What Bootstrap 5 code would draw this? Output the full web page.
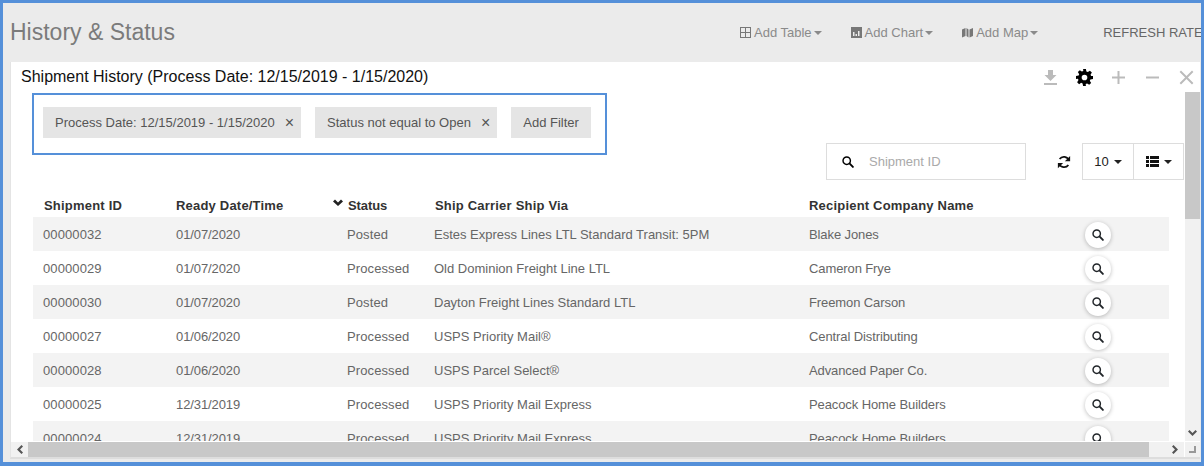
<!DOCTYPE html>
<html lang="en">
  <head>
    <meta charset="UTF-8" />
    <title>History &amp; Status</title>
    <link href="https://cdn.jsdelivr.net/npm/bootstrap@5.3.0/dist/css/bootstrap.min.css" rel="stylesheet" />
    <style>
      html, body { height: 100%; overflow: hidden; }
      body {
        font-family: "Liberation Sans", Arial, sans-serif;
        font-size: 13px;
        color: #555;
        background: #ebebeb;
      }
      .app-frame {
        width: 1204px;
        height: 466px;
        border: solid #5590d9;
        border-width: 3px 3px 4px 3px;
        background: #ebebeb;
        padding-left: 7px;
        display: flex;
        flex-direction: column;
      }
      .page-head { height: 59px; flex: none; }
      .page-title { font-size: 23px; font-weight: 400; color: #7b7b7b; margin: 0; line-height: 1; }
      .head-links { width: 461px; flex: none; overflow: hidden; white-space: nowrap; gap: 30px; margin-left: auto; font-size: 13px; color: #888; }
      .head-link { display: inline-flex; align-items: center; gap: 3px; color: #8a8a8a; text-decoration: none; }
      .head-link svg { fill: #777; }
      .caret-down { display: inline-block; width: 0; height: 0; border-left: 4px solid transparent; border-right: 4px solid transparent; border-top: 4px solid currentColor; }
      .head-link .caret-down { margin-left: -1px; margin-right: -1px; }
      .refresh-rate { color: #666; margin-left: 36px; }
      .panel-box { flex: 1; min-height: 0; background: #fff; border-bottom: 2px solid #ddd; border-left: 1px solid #e4e4e4; margin: 0 1px 3px 0; display: flex; flex-direction: column; }
      .panel-title-row { height: 30px; flex: none; padding: 5px 6px 0 10px; }
      .panel-title { font-size: 16px; color: #111; line-height: 20px; }
      .panel-tools { gap: 19px; padding-top: 3px; }
      .panel-tools svg { fill: #bbb; display: block; }
      .panel-tools svg.tool-dark { fill: #000; margin: -1px -1px 0; }
      .panel-body-row { flex: 1; min-height: 0; display: flex; }
      .panel-main { flex: 1; min-width: 0; overflow: hidden; padding-left: 22px; }
      .filter-box { width: 575px; height: 62px; border: 2px solid #5590d9; margin: 1px 0 0 -1px; padding: 12px 0 0 9px; gap: 14px; }
      .filter-chip { height: 31px; background: #e5e5e5; color: #555; padding: 0 12px; display: flex; align-items: center; white-space: nowrap; }
      .filter-chip:has(.chip-x) { padding-right: 7px; }
      .chip-x { font-size: 16px; margin-left: 10px; line-height: 1; color: #555; }
      .tool-row { height: 37px; margin-top: -12px; padding-right: 1px; align-items: flex-start; }
      .search-box { width: 200px; height: 37px; border: 1px solid #ddd; padding-left: 15px; color: #aaa; gap: 15px; margin-right: 30px; }
      .refresh-btn { width: 16px; margin-right: 10px; height: 37px; }
      .pick-group { border: 1px solid #ddd; height: 37px; color: #222; }
      .pick-cell { width: 50px; height: 35px; gap: 5px; }
      .pick-cell + .pick-cell { border-left: 1px solid #ddd; }
      .grid-table { width: 1136px; margin: 0; table-layout: fixed; --bs-table-striped-bg: #f3f3f3; --bs-table-striped-color: #666; --bs-table-color: #666; --bs-table-bg: transparent; }
      .grid-table th, .grid-table td { border: 0; padding: 0; vertical-align: middle; white-space: nowrap; }
      .grid-table thead th { height: 37px; font-weight: 700; color: #333; padding-left: 11px; padding-top: 15px; letter-spacing: .2px; }
      .grid-table thead th:nth-child(3) { letter-spacing: -.1px; }
      .grid-table tbody td { height: 34px; padding-left: 10px; padding-top: 2px; font-size: 13px; letter-spacing: .1px; }
      .grid-table tbody td:nth-child(2) { padding-left: 11px; letter-spacing: -.1px; }
      .grid-table tbody td:nth-child(4) { letter-spacing: 0; }
      .grid-table tbody td:nth-child(5) { letter-spacing: -.1px; }
      .sort-mark { position: absolute; margin-left: -15px; margin-top: 3px; }
      .view-btn { width: 26px; height: 26px; border-radius: 50%; background: #fff; box-shadow: 0 1px 4px rgba(0,0,0,.25); display: flex; align-items: center; justify-content: center; }
      .vscroll { width: 15px; flex: none; background: #f1f1f1; display: flex; flex-direction: column; }
      .vscroll-thumb { height: 127px; background: #c8c8c8; }
      .hscroll { height: 16px; flex: none; display: flex; background: #f1f1f1; border-top: 1px solid #fff; }
      .hscroll-end { width: 17px; display: flex; align-items: center; justify-content: center; }
      .hscroll-thumb { width: 1121px; background: #c8c8c8; }
      .hscroll-fill { flex: 1; }
      .scroll-corner { width: 16px; display: flex; align-items: center; justify-content: center; border-left: 1px solid #fff; }
    </style>
  </head>
  <body>
    <svg width="0" height="0" class="d-block" style="position:absolute">
      <defs>
        <symbol id="ic-search" viewBox="0 0 14 14"><circle cx="5.500" cy="5.500" r="4.300" fill="none" stroke="currentColor" stroke-width="1.700"/><path d="M8.700 8.700l4 4" fill="none" stroke="currentColor" stroke-width="2.200" stroke-linecap="round"/></symbol>
      </defs>
    </svg>
    <div class="app-frame">
      <div class="page-head d-flex">
        <div class="flex-grow-1 d-flex align-items-center"><h1 class="page-title">History &amp; Status</h1></div>
        <div class="head-links d-flex align-items-center">
          <a class="head-link" href="#"><svg width="11" height="11" viewBox="0 0 11 11"><path d="M0 0h11v11H0zM1 1v4h4V1zm5 0v4h4V1zM1 6v4h4V6zm5 0v4h4V6z" fill-rule="evenodd"/></svg>Add Table<span class="caret-down"></span></a>
          <a class="head-link" href="#"><svg width="11" height="11" viewBox="0 0 11 11"><path d="M0 0h11v11H0zM2 5v4h1.500V5zm2.500 2v2H6V7zM7 4v5h1.500V4z" fill-rule="evenodd"/></svg>Add Chart<span class="caret-down"></span></a>
          <a class="head-link" href="#"><svg width="11" height="11" viewBox="0 0 11 11"><path d="M0 2.500L3.500 1v8L0 10.500zM4.500 1L6.500 2.500v8L4.500 9zM7.500 2.500L11 1v8l-3.500 1.500z"/></svg>Add Map<span class="caret-down"></span></a>
          <span class="refresh-rate">REFRESH RATE</span>
        </div>
      </div>
      <div class="panel-box">
        <div class="panel-title-row d-flex justify-content-between">
          <div class="panel-title">Shipment History (Process Date: 12/15/2019 - 1/15/2020)</div>
          <div class="panel-tools d-flex">
            <svg width="15" height="15" viewBox="0 0 15 15"><path d="M5 0h5v5h3.500L7.500 11 1.500 5H5zM1 13h13v2H1z"/></svg>
            <svg class="tool-dark" width="17" height="17" viewBox="0 0 24 24"><path fill-rule="evenodd" d="M10 0h4l.7 3.400 2 .8 2.900-1.900 2.800 2.800-1.900 2.900.8 2L24 10v4l-3.700.7-.8 2 1.900 2.900-2.800 2.800-2.900-1.900-2 .8L14 24h-4l-.7-3.700-2-.8-2.900 1.900-2.800-2.800 1.900-2.900-.8-2L0 14v-4l3.700-.7.8-2-1.900-2.900 2.800-2.800 2.900 1.900 2-.8zM12 8a4 4 0 1 0 0 8 4 4 0 0 0 0-8z"/></svg>
            <svg width="15" height="15" viewBox="0 0 15 15"><path d="M6.500 1h2v5.500H14v2H8.500V14h-2V8.500H1v-2h5.500z"/></svg>
            <svg width="15" height="15" viewBox="0 0 15 15"><path d="M1 6.500h13v2H1z"/></svg>
            <svg width="15" height="15" viewBox="0 0 15 15"><path d="M2 .600L7.500 6.100 13 .600l1.400 1.400-5.500 5.500 5.500 5.500-1.400 1.400-5.500-5.500L2 14.400.600 13l5.500-5.500L.600 2z"/></svg>
          </div>
        </div>
        <div class="panel-body-row">
          <div class="panel-main">
            <div class="filter-box d-flex">
              <div class="filter-chip">Process Date: 12/15/2019 - 1/15/2020<span class="chip-x">×</span></div>
              <div class="filter-chip">Status not equal to Open<span class="chip-x">×</span></div>
              <div class="filter-chip">Add Filter</div>
            </div>
            <div class="tool-row d-flex justify-content-end">
              <div class="search-box d-flex align-items-center"><svg class="text-black" width="12" height="12"><use href="#ic-search"/></svg>Shipment ID</div>
              <div class="refresh-btn d-flex align-items-center justify-content-center">
                <svg width="14" height="14" viewBox="0 0 16 16" fill="none" stroke="#111" stroke-width="2"><path d="M13.500 6A6 6 0 0 0 3 4.500M2.500 10A6 6 0 0 0 13 11.500"/><path fill="#111" stroke="none" d="M15 1v6h-6zM1 15V9h6z"/></svg>
              </div>
              <div class="pick-group d-flex">
                <div class="pick-cell d-flex align-items-center justify-content-center">10<span class="caret-down"></span></div>
                <div class="pick-cell d-flex align-items-center justify-content-center">
                  <svg width="13" height="11" viewBox="0 0 13 11" fill="#111"><path d="M0 0h3v3H0zM4 0h9v3H4zM0 4h3v3H0zM4 4h9v3H4zM0 8h3v3H0zM4 8h9v3H4z"/></svg>
                  <span class="caret-down"></span>
                </div>
              </div>
            </div>
            <table class="table table-striped grid-table">
              <colgroup>
                <col style="width:132px"><col style="width:172px"><col style="width:87px"><col style="width:375px"><col style="width:276px"><col>
              </colgroup>
              <thead>
                <tr>
                  <th>Shipment ID</th>
                  <th>Ready Date/Time</th>
                  <th><svg class="sort-mark" width="10" height="7" viewBox="0 0 10 7" fill="#222"><path d="M0 2.500L2 .5 5 3.500 8 .5 10 2.500 5 7z"/></svg>Status</th>
                  <th>Ship Carrier Ship Via</th>
                  <th style="padding-left:10px">Recipient Company Name</th>
                  <th></th>
                </tr>
              </thead>
              <tbody>
                <tr><td>00000032</td><td>01/07/2020</td><td>Posted</td><td>Estes Express Lines LTL Standard Transit: 5PM</td><td>Blake Jones</td><td><div class="view-btn text-dark"><svg width="12" height="12"><use href="#ic-search"/></svg></div></td></tr>
                <tr><td>00000029</td><td>01/07/2020</td><td>Processed</td><td>Old Dominion Freight Line LTL</td><td>Cameron Frye</td><td><div class="view-btn text-dark"><svg width="12" height="12"><use href="#ic-search"/></svg></div></td></tr>
                <tr><td>00000030</td><td>01/07/2020</td><td>Posted</td><td>Dayton Freight Lines Standard LTL</td><td>Freemon Carson</td><td><div class="view-btn text-dark"><svg width="12" height="12"><use href="#ic-search"/></svg></div></td></tr>
                <tr><td>00000027</td><td>01/06/2020</td><td>Processed</td><td>USPS Priority Mail®</td><td>Central Distributing</td><td><div class="view-btn text-dark"><svg width="12" height="12"><use href="#ic-search"/></svg></div></td></tr>
                <tr><td>00000028</td><td>01/06/2020</td><td>Processed</td><td>USPS Parcel Select®</td><td>Advanced Paper Co.</td><td><div class="view-btn text-dark"><svg width="12" height="12"><use href="#ic-search"/></svg></div></td></tr>
                <tr><td>00000025</td><td>12/31/2019</td><td>Processed</td><td>USPS Priority Mail Express</td><td>Peacock Home Builders</td><td><div class="view-btn text-dark"><svg width="12" height="12"><use href="#ic-search"/></svg></div></td></tr>
                <tr><td>00000024</td><td>12/31/2019</td><td>Processed</td><td>USPS Priority Mail Express</td><td>Peacock Home Builders</td><td><div class="view-btn text-dark"><svg width="12" height="12"><use href="#ic-search"/></svg></div></td></tr>
              </tbody>
            </table>
          </div>
          <div class="vscroll">
            <div class="vscroll-thumb"></div>
            <div class="flex-grow-1"></div>
            <div class="d-flex justify-content-center pb-1"><svg width="9" height="7" viewBox="0 0 9 7" fill="#555"><path d="M0 1.500L1.500 0l3 3 3-3L9 1.500l-4.500 4.500z"/></svg></div>
          </div>
        </div>
        <div class="hscroll">
          <div class="hscroll-end"><svg width="7" height="9" viewBox="0 0 7 9" fill="#555"><path d="M5.500 0L7 1.500l-3 3 3 3L5.500 9 1 4.500z"/></svg></div>
          <div class="hscroll-thumb"></div>
          <div class="hscroll-fill"></div>
          <div class="hscroll-end"><svg width="7" height="9" viewBox="0 0 7 9" fill="#555"><path d="M1.500 0L0 1.500l3 3-3 3L1.500 9 6 4.500z"/></svg></div>
          <div class="scroll-corner"><svg width="7" height="7" viewBox="0 0 7 7" fill="#999"><path d="M5 0h2v7H0V5h5z"/></svg></div>
        </div>
      </div>
    </div>
  </body>
</html>
